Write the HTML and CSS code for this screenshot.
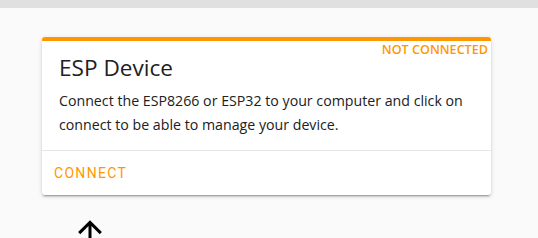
FILE: index.html
```html
<!DOCTYPE html>
<html>
<head>
<meta charset="utf-8">
<link rel="stylesheet" href="styles.css">
</head>
<body>
<div class="topbar"></div>
<main class="page">
  <section class="card">
    <span class="status">NOT CONNECTED</span>
    <h2 class="title">ESP Device</h2>
    <p class="text">Connect the ESP8266 or ESP32 to your computer and click on connect to be able to manage your device.</p>
    <div class="divider"></div>
    <div class="actions">
      <button class="btn">CONNECT</button>
    </div>
  </section>
  <div class="arrow">
    <svg viewBox="0 0 24 24" width="36" height="36"><path d="M13,20H11V8L5.5,13.5L4.08,12.08L12,4.16L19.92,12.08L18.5,13.5L13,8V20Z" fill="#000"/></svg>
  </div>
</main>
</body>
</html>
```
FILE: styles.css
```css
html, body { margin: 0; padding: 0; }
body {
  background: #fafafa;
  width: 538px;
  height: 238px;
  overflow: hidden;
  font-family: "Open Sans", "Noto Sans", sans-serif;
}
.topbar { height: 8px; background: #e0e0e0; }
.page { padding: 29px 0 0 42px; }
.card {
  position: relative;
  width: 449px;
  background: #fff;
  border-top: 4px solid #ff9800;
  border-radius: 3px;
  box-shadow: 0 3px 1px -2px rgba(0,0,0,.2), 0 2px 2px 0 rgba(0,0,0,.14), 0 1px 5px 0 rgba(0,0,0,.12);
}
.status {
  position: absolute;
  top: 0;
  right: 3px;
  font-size: 12.6px;
  font-weight: 600;
  color: #ff9800;
}
.title {
  margin: 0;
  padding: 11px 16px 0 17px;
  font-size: 22.6px;
  font-weight: 400;
  line-height: 32px;
  color: #212121;
}
.text {
  margin: 0;
  padding: 5px 16px 13px 17px;
  font-size: 14.2px;
  line-height: 24px;
  color: #212121;
}
.divider { height: 1px; background: #e6e6e6; }
.actions { padding: 8px; display: flex; }
.btn {
  background: none;
  border: 0;
  padding: 0 4px;
  height: 28px;
  font-family: Roboto, sans-serif;
  font-size: 14px;
  letter-spacing: 1.3px;
  color: #ff9800;
}
.arrow { padding: 19px 0 0 30px; }
.arrow svg { display: block; }
```
